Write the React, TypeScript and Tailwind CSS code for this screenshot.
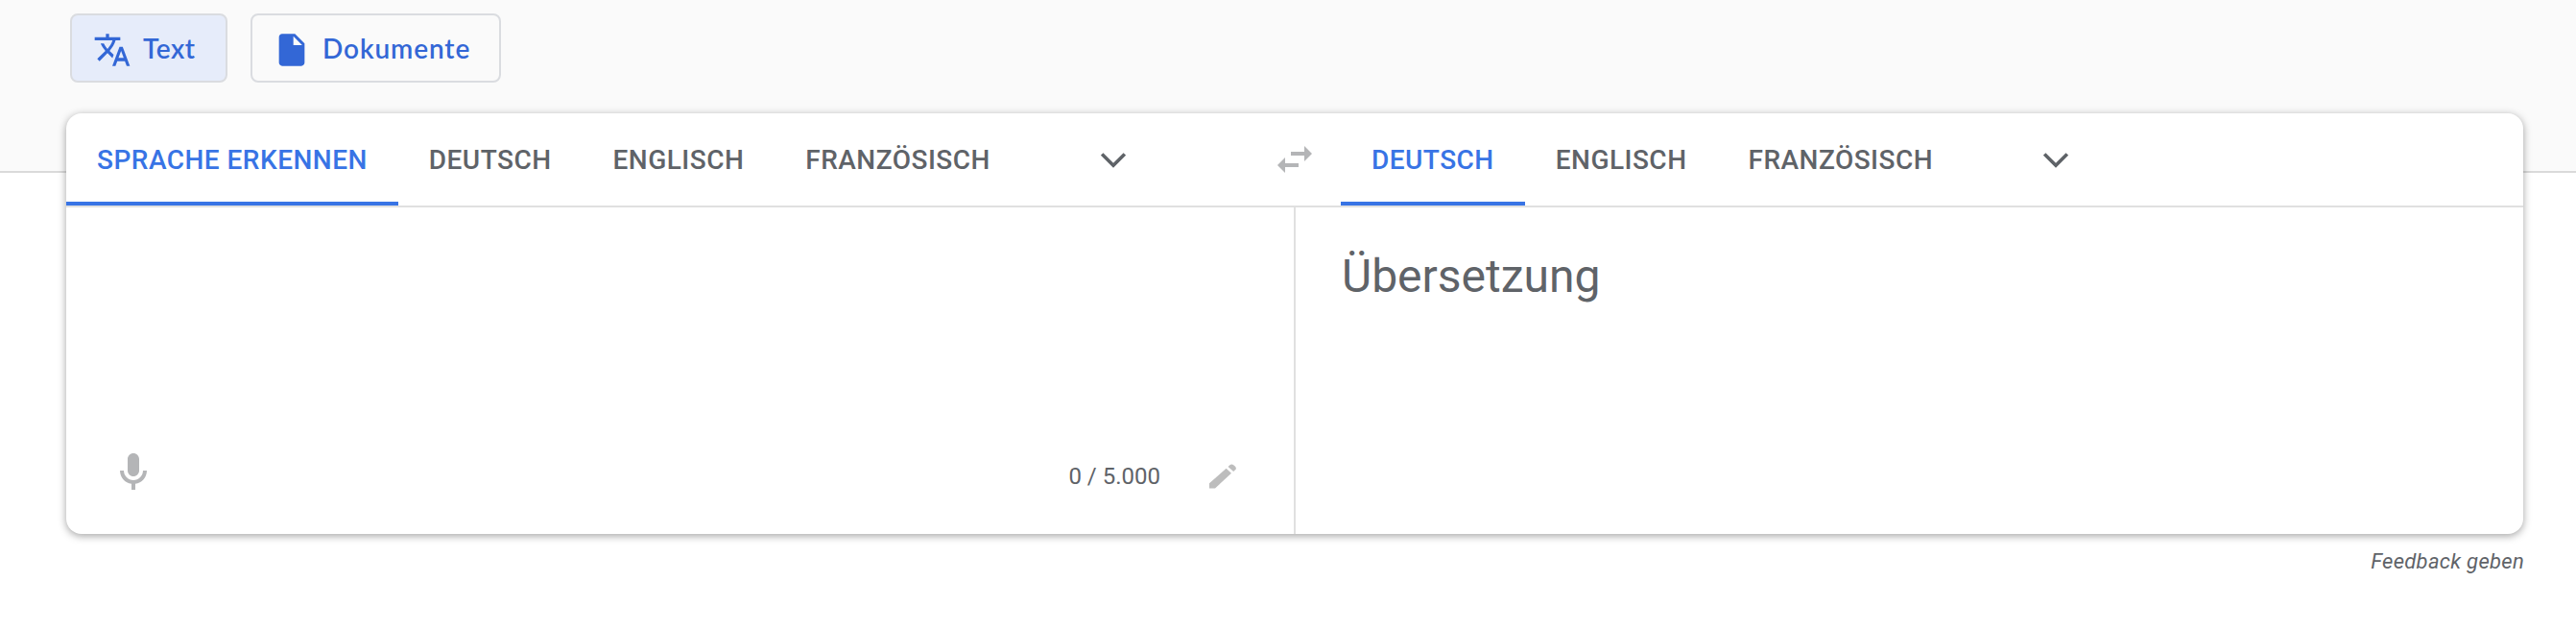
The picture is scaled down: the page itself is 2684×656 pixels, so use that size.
import React, { useState } from "react";

const sourceLangs = ["Sprache erkennen", "Deutsch", "Englisch", "Französisch"];
const targetLangs = ["Deutsch", "Englisch", "Französisch"];

function Icon({ d, className }: { d: string; className: string }) {
  return (
    <svg viewBox="0 0 24 24" fill="currentColor" className={className}>
      <path d={d} />
    </svg>
  );
}

function Tab({ label, active, onClick }: { label: string; active: boolean; onClick: () => void }) {
  return (
    <button
      onClick={onClick}
      className={`h-24 px-8 pt-1.5 border-b-4 text-[28px] font-medium uppercase tracking-[0.48px] whitespace-nowrap cursor-pointer ${active ? "text-[#3874e5] border-[#3874e5]" : "text-[#5f6368] border-transparent"}`}
    >
      {label}
    </button>
  );
}

function Chevron() {
  return (
    <svg viewBox="0 0 26 16" fill="none" stroke="currentColor" strokeWidth="3.6" className="w-[26px] h-4 text-[#5f6368]">
      <path d="M1.2 1.4L13 13.2L24.8 1.4" />
    </svg>
  );
}

export default function App() {
  const [source, setSource] = useState("Sprache erkennen");
  const [target, setTarget] = useState("Deutsch");
  const [text, setText] = useState("");

  return (
    <div className="h-[656px] overflow-hidden bg-[linear-gradient(to_bottom,#fafafa_178px,#dadada_178px,#dadada_180px,#fff_180px)] font-[Roboto,sans-serif]">
      <div className="flex gap-6 pt-3.5 pl-[73px] font-[Lato,sans-serif] text-[28px] font-semibold text-[#3367d6]">
        <button className="flex items-center h-[72px] w-[164px] pl-[22px] gap-3 border-2 border-[#dadce0] rounded-lg bg-[#e6ecfa] tracking-[0.5px] cursor-pointer">
          <Icon className="w-10 h-10 mt-1" d="M12.87 15.07l-2.54-2.51.03-.03c1.74-1.94 2.98-4.17 3.71-6.53H17V4h-7V2H8v2H1v1.99h11.17C11.5 7.92 10.44 9.75 9 11.35 8.07 10.32 7.3 9.19 6.69 8h-2c.73 1.63 1.73 3.17 2.98 4.56l-5.09 5.02L4 19l5-5 3.11 3.11.76-2.04zM18.5 10h-2L12 22h2l1.12-3h4.75L21 22h2l-4.5-12zm-2.62 7l1.62-4.33L19.12 17h-3.24z" />
          Text
        </button>
        <button className="flex items-center h-[72px] w-[261px] pl-[21px] gap-3 border-2 border-[#dadce0] rounded-lg tracking-[0.9px] cursor-pointer">
          <Icon className="w-10 h-10 mt-1" d="M6 2c-1.1 0-1.99.9-1.99 2L4 20c0 1.1.89 2 1.99 2H18c1.1 0 2-.9 2-2V8l-6-6H6zm7 7V3.5L18.5 9H13z" />
          Dokumente
        </button>
      </div>

      <div className="mt-8 ml-[69px] w-[2560px] h-[438px] flex flex-col rounded-2xl bg-white overflow-hidden shadow-[0_2px_8px_rgba(0,0,0,0.37)]">
        <div className="flex h-[98px] border-b-2 border-[#e0e0e0]">
          <div className="flex w-[1256px]">
            {sourceLangs.map(lang => (
              <Tab key={lang} label={lang} active={lang === source} onClick={() => setSource(lang)} />
            ))}
            <button className="pl-[83px] pt-0.5 cursor-pointer"><Chevron /></button>
          </div>
          <div className="w-[72px] pt-6 text-[#b4b5b7]">
            <Icon className="w-12 h-12" d="M6.99 11L3 15l3.99 4v-3H14v-2H6.99v-3zM21 9l-3.99-4v3H10v2h7.01v3L21 9z" />
          </div>
          <div className="flex">
            {targetLangs.map(lang => (
              <Tab key={lang} label={lang} active={lang === target} onClick={() => setTarget(lang)} />
            ))}
            <button className="pl-[83px] pt-0.5 cursor-pointer"><Chevron /></button>
          </div>
        </div>

        <div className="flex flex-1">
          <div className="flex flex-col w-[1281px] border-r-2 border-[#e0e0e0]">
            <textarea value={text} maxLength={5000} onChange={e => setText(e.target.value)} className="flex-1 px-8 pt-10 text-5xl resize-none outline-none" />
            <div className="flex items-center h-[104px] pb-[17px] pl-[46px] pr-[60px] text-[#b4b5b7]">
              <Icon className="w-12 h-12 mb-2" d="M12 14c1.66 0 3-1.34 3-3V5c0-1.66-1.34-3-3-3S9 3.34 9 5v6c0 1.66 1.34 3 3 3zm5-3c0 2.76-2.24 5-5 5s-5-2.24-5-5H5c0 3.53 2.61 6.43 6 6.92V21h2v-3.08c3.39-.49 6-3.39 6-6.92h-2z" />
              <span className="ml-auto mr-[51px] text-2xl text-[#5f6368]">{text.length} / 5.000</span>
              <svg viewBox="0 0 28 26" fill="#bdbdbd" className="w-7 h-[26px]">
                <path d="M0 25.5V20.3L17.6 4.8L23 9.8L6 25.5ZM19.6 3L21.4 1.2Q23.2 -.2 25.6 1.5Q28.4 3.4 27.8 5.6L25.2 7.9Z" />
              </svg>
            </div>
          </div>
          <div className="flex-1 pl-12 pt-10 text-5xl leading-[64px] text-[#5f6368]">Übersetzung</div>
        </div>
      </div>

      <div className="mt-[13px] mr-[54px] text-right text-[22px] leading-8 italic tracking-[0.3px] text-[#5f6368]">Feedback geben</div>
    </div>
  );
}
